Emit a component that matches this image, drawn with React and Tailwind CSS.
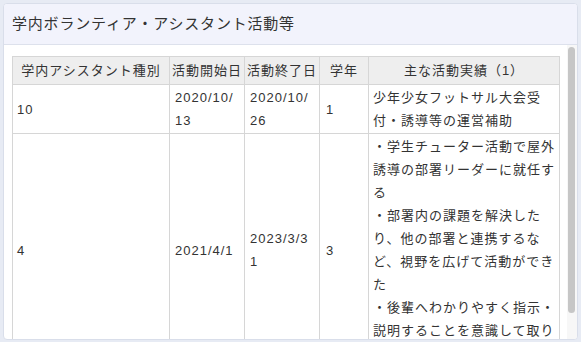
import React from 'react'

// Volunteer / assistant activity record table
const rows = [
  {
    kind: '10',
    start: '2020/10/13',
    end: '2020/10/26',
    grade: '1',
    detail: ['少年少女フットサル大会受付・誘導等の運営補助'],
  },
  {
    kind: '4',
    start: '2021/4/1',
    end: '2023/3/31',
    grade: '3',
    detail: [
      '・学生チューター活動で屋外誘導の部署リーダーに就任する',
      '・部署内の課題を解決したり、他の部署と連携するなど、視野を広げて活動ができた',
      '・後輩へわかりやすく指示・説明することを意識して取り組めた',
    ],
  },
]

const headers = ['学内アシスタント種別', '活動開始日', '活動終了日', '学年', '主な活動実績（1）']

export default function App() {
  return (
    <div
      className="w-[581px] h-[342px] bg-[#e7ebf4] p-[3px] text-[#333]"
      style={{ fontFamily: '"Liberation Sans", "Noto Sans CJK JP", sans-serif' }}
    >
      <div className="h-[337px] flex flex-col rounded-[4px] border border-[#d9deea] bg-white overflow-hidden">
        {/* Card header */}
        <div className="h-[41px] shrink-0 flex items-center px-[8px] bg-[#f2f3fc] border-b border-[#dde1ec]">
          <h2 className="text-[15px] tracking-[0.8px] font-normal">学内ボランティア・アシスタント活動等</h2>
        </div>

        {/* Body with scroll track */}
        <div className="flex-1 flex min-h-0">
          <div className="flex-1 overflow-hidden pl-[8px] pt-[11px]">
            <table className="w-[548px] table-fixed border-collapse text-[13px] tracking-[1px] leading-[23px]">
              <colgroup>
                <col className="w-[157px]" />
                <col className="w-[75px]" />
                <col className="w-[75px]" />
                <col className="w-[49px]" />
                <col />
              </colgroup>
              <thead>
                <tr className="bg-[#eeeeee]">
                  {headers.map(h => (
                    <th key={h} className="border border-[#d6d6d6] font-normal text-center py-[2px] px-0 whitespace-nowrap">
                      {h}
                    </th>
                  ))}
                </tr>
              </thead>
              <tbody>
                {rows.map(row => (
                  <tr key={row.kind}>
                    <td className="border border-[#d6d6d6] align-middle px-[4px] py-[1px]">{row.kind}</td>
                    <td className="border border-[#d6d6d6] align-middle px-[5px] py-[1px] break-all">{row.start}</td>
                    <td className="border border-[#d6d6d6] align-middle px-[5px] py-[1px] break-all">{row.end}</td>
                    <td className="border border-[#d6d6d6] align-middle px-[6px] py-[1px]">{row.grade}</td>
                    <td className="border border-[#d6d6d6] align-middle pl-[4px] pr-[3px] py-[1px]">
                      {row.detail.map((line, i) => (
                        <React.Fragment key={i}>
                          {i > 0 && <br />}
                          {line}
                        </React.Fragment>
                      ))}
                    </td>
                  </tr>
                ))}
              </tbody>
            </table>
          </div>
          <div className="w-[10px] shrink-0 bg-[#f7f7f7] pt-[2px] pl-[1px]">
            <div className="w-[7px] h-[266px] rounded-[4px] bg-[#c6c6c6]" />
          </div>
        </div>
      </div>
    </div>
  )
}
